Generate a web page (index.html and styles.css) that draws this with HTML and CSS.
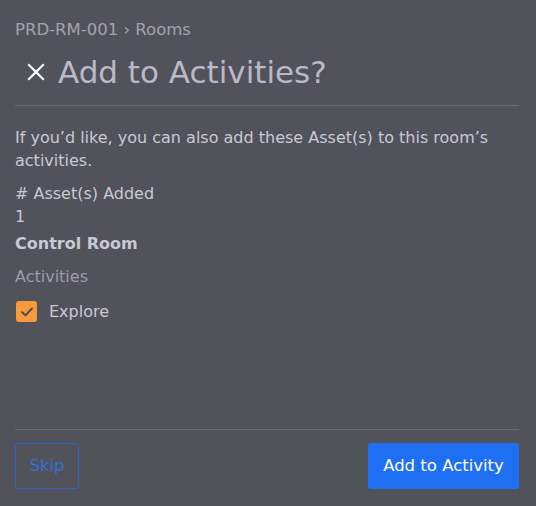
FILE: index.html
```html
<!DOCTYPE html>
<html>
<head>
<meta charset="utf-8">
<link rel="stylesheet" href="styles.css">
</head>
<body>
<div class="modal">
  <div class="breadcrumb">PRD-RM-001 › Rooms</div>
  <div class="title-row">
    <svg class="close" width="18" height="18" viewBox="0 0 18 18"><path d="M2 2L16 16M16 2L2 16" stroke="#ffffff" stroke-width="2.2" stroke-linecap="square"/></svg>
    <h1 class="title">Add to Activities?</h1>
  </div>
  <div class="divider"></div>
  <div class="body">
    <p class="intro">If you’d like, you can also add these Asset(s) to this room’s activities.</p>
    <div class="stat-label"># Asset(s) Added</div>
    <div class="stat-value">1</div>
    <div class="room">Control Room</div>
    <div class="section">Activities</div>
    <label class="check-row">
      <span class="checkbox"><svg width="14" height="14" viewBox="0 0 14 14"><path d="M2.2 7.2L5.5 10.4L11.8 3.6" fill="none" stroke="#4a4a50" stroke-width="2" stroke-linecap="round" stroke-linejoin="round"/></svg></span>
      <span class="check-label">Explore</span>
    </label>
  </div>
  <div class="footer">
    <button class="btn btn-outline">Skip</button>
    <button class="btn btn-primary">Add to Activity</button>
  </div>
</div>
</body>
</html>
```

FILE: styles.css
```css
* { box-sizing: border-box; }
html, body { margin: 0; padding: 0; }
body {
  background: #52525b;
  width: 536px;
  height: 506px;
  overflow: hidden;
  font-family: "DejaVu Sans", sans-serif;
}
.modal {
  height: 506px;
  padding: 0 17px 0 15px;
  display: flex;
  flex-direction: column;
}
.breadcrumb {
  margin-top: 20px;
  font-size: 16.5px;
  color: #a3a3ab;
  line-height: 20px;
}
.title-row {
  display: flex;
  align-items: center;
  margin-top: 17px;
  padding-left: 12px;
  height: 30px;
}
.close { flex: none; }
.title {
  margin: 0 0 0 13px;
  font-weight: normal;
  font-size: 31px;
  color: #b9b9c9;
  line-height: 30px;
}
.divider {
  margin-top: 18px;
  height: 1px;
  background: #6b6b72;
}
.body {
  flex: 1;
  color: #c9c9d3;
  font-size: 16px;
}
.intro {
  margin: 20px 0 0;
  line-height: 23px;
}
.stat-label { margin-top: 10px; line-height: 23px; }
.stat-value { line-height: 23px; }
.room { margin-top: 4px; font-weight: bold; line-height: 23px; }
.section { margin-top: 10px; color: #9c9ca6; line-height: 23px; }
.check-row {
  display: flex;
  align-items: center;
  margin-top: 13px;
}
.checkbox {
  width: 21px;
  height: 21px;
  border-radius: 3px;
  background: #f79a3c;
  display: flex;
  align-items: center;
  justify-content: center;
  margin-left: 1px;
}
.check-label { margin-left: 12px; color: #c9c9d3; }
.footer {
  border-top: 1px solid #6b6b72;
  display: flex;
  justify-content: space-between;
  padding-top: 13px;
  height: 77px;
}
.btn {
  height: 46px;
  font-family: inherit;
  font-size: 16.5px;
  line-height: 20px;
  padding: 0 0 1px;
  border-radius: 3px;
  cursor: pointer;
}
.btn-outline {
  width: 64px;
  background: transparent;
  border: 1px solid #2a64c8;
  color: #2f6fd6;
}
.btn-primary {
  width: 151px;
  background: #1f6ff2;
  border: none;
  color: #ffffff;
}
```
